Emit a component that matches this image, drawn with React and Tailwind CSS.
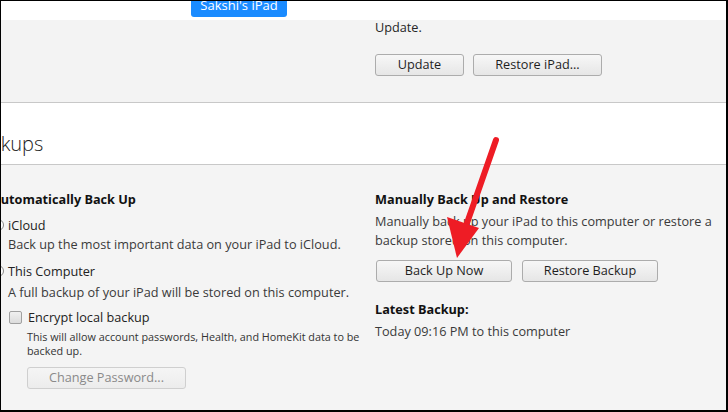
import React from 'react'

const font = { fontFamily: '"Open Sans", "Noto Sans", sans-serif' }

const Btn = ({ children, className = '', disabled }) => (
  <div
    className={`h-[22px] flex items-center justify-center rounded-[3px] border bg-gradient-to-b text-[12.7px] ${disabled ? 'text-[#8a8a8a] border-[#cfcfcf] from-[#f5f5f5] to-[#ececec]' : 'text-[#1f1f1f] border-[#acacac] from-[#f7f7f7] to-[#e6e6e6]'} ${className}`}
  >
    {children}
  </div>
)

export default function App() {
  return (
    <div
      className="relative w-[728px] h-[412px] overflow-hidden bg-white border-t border-l border-r-2 border-b-2 border-black"
      style={font}
    >
      {/* device tag strip */}
      <div className="h-[20px] bg-white border-b border-[#e4e4e4] flex">
        <div className="ml-[190px] w-[96px] h-[16px] bg-[#1a8bff] rounded-b-[3px] overflow-hidden flex justify-center">
          <span className="text-white text-[13px] leading-none -mt-[2px]">Sakshi's iPad</span>
        </div>
      </div>

      {/* update panel */}
      <div className="h-[83px] bg-[#f3f3f3] border-b border-[#c8c8c8] pl-[374px] text-[12.7px] text-[#262626]">
        <div className="leading-[14px] -mt-[1px]">Update.</div>
        <div className="flex gap-[9px] mt-[20px]">
          <Btn className="w-[89px]">Update</Btn>
          <Btn className="w-[129px]">Restore iPad...</Btn>
        </div>
      </div>

      {/* section title */}
      <div className="h-[62px] bg-white border-b border-[#c8c8c8] flex items-end pb-[6px]">
        <span className="text-[20px] font-light text-[#222] -ml-[33px] leading-[28px]">Backups</span>
      </div>

      {/* backups body */}
      <div className="bg-[#f4f4f4] h-[245px] flex text-[12.7px] text-[#3a3a3a]">
        <div className="w-[374px] shrink-0 pt-[25px]">
          <div className="font-bold text-[#111] -ml-[9px] leading-[18px]">Automatically Back Up</div>
          <div className="flex items-center mt-[8px] leading-[18px]">
            <span className="w-[12px] h-[12px] rounded-full border border-[#888] bg-white -ml-[9px] mr-[4px]" />
            <span className="text-[#222]">iCloud</span>
          </div>
          <div className="pl-[7px] leading-[18px] mt-[1px]">Back up the most important data on your iPad to iCloud.</div>
          <div className="flex items-center mt-[9px] leading-[18px]">
            <span className="w-[12px] h-[12px] rounded-full border border-[#888] bg-white -ml-[9px] mr-[4px]" />
            <span className="text-[#222]">This Computer</span>
          </div>
          <div className="pl-[7px] leading-[18px] mt-[3px]">A full backup of your iPad will be stored on this computer.</div>
          <div className="flex items-center mt-[7px] pl-[8px] leading-[18px]">
            <span className="w-[13px] h-[13px] rounded-[2px] border border-[#a0a0a0] bg-gradient-to-b from-[#f0f0f0] to-[#dcdcdc] mr-[6px]" />
            <span className="text-[#222]">Encrypt local backup</span>
          </div>
          <div className="pl-[26px] text-[10.8px] leading-[14px] mt-[4px] text-[#333]">
            This will allow account passwords, Health, and HomeKit data to be
            <br />
            backed up.
          </div>
          <div className="pl-[26px] mt-[9px]">
            <Btn disabled className="w-[159px]">Change Password...</Btn>
          </div>
        </div>

        <div className="flex-1 pt-[25px]">
          <div className="font-bold text-[#111] leading-[18px]">Manually Back Up and Restore</div>
          <div className="mt-[4px] leading-[19px]">
            Manually back up your iPad to this computer or restore a
            <br />
            backup stored on this computer.
          </div>
          <div className="flex gap-[10px] mt-[10px] pl-[1px]">
            <Btn className="w-[136px]">Back Up Now</Btn>
            <Btn className="w-[136px]">Restore Backup</Btn>
          </div>
          <div className="font-bold text-[#111] leading-[18px] mt-[18px]">Latest Backup:</div>
          <div className="leading-[18px] mt-[4px]">Today 09:16 PM to this computer</div>
        </div>
      </div>

      {/* red arrow annotation */}
      <svg className="absolute left-0 top-0 pointer-events-none" width="728" height="412">
        <line x1="495" y1="139" x2="466" y2="222" stroke="#ee1c25" strokeWidth="6" strokeLinecap="round" />
        <polygon points="446,216 478,227 456,257" fill="#ee1c25" />
      </svg>
    </div>
  )
}
